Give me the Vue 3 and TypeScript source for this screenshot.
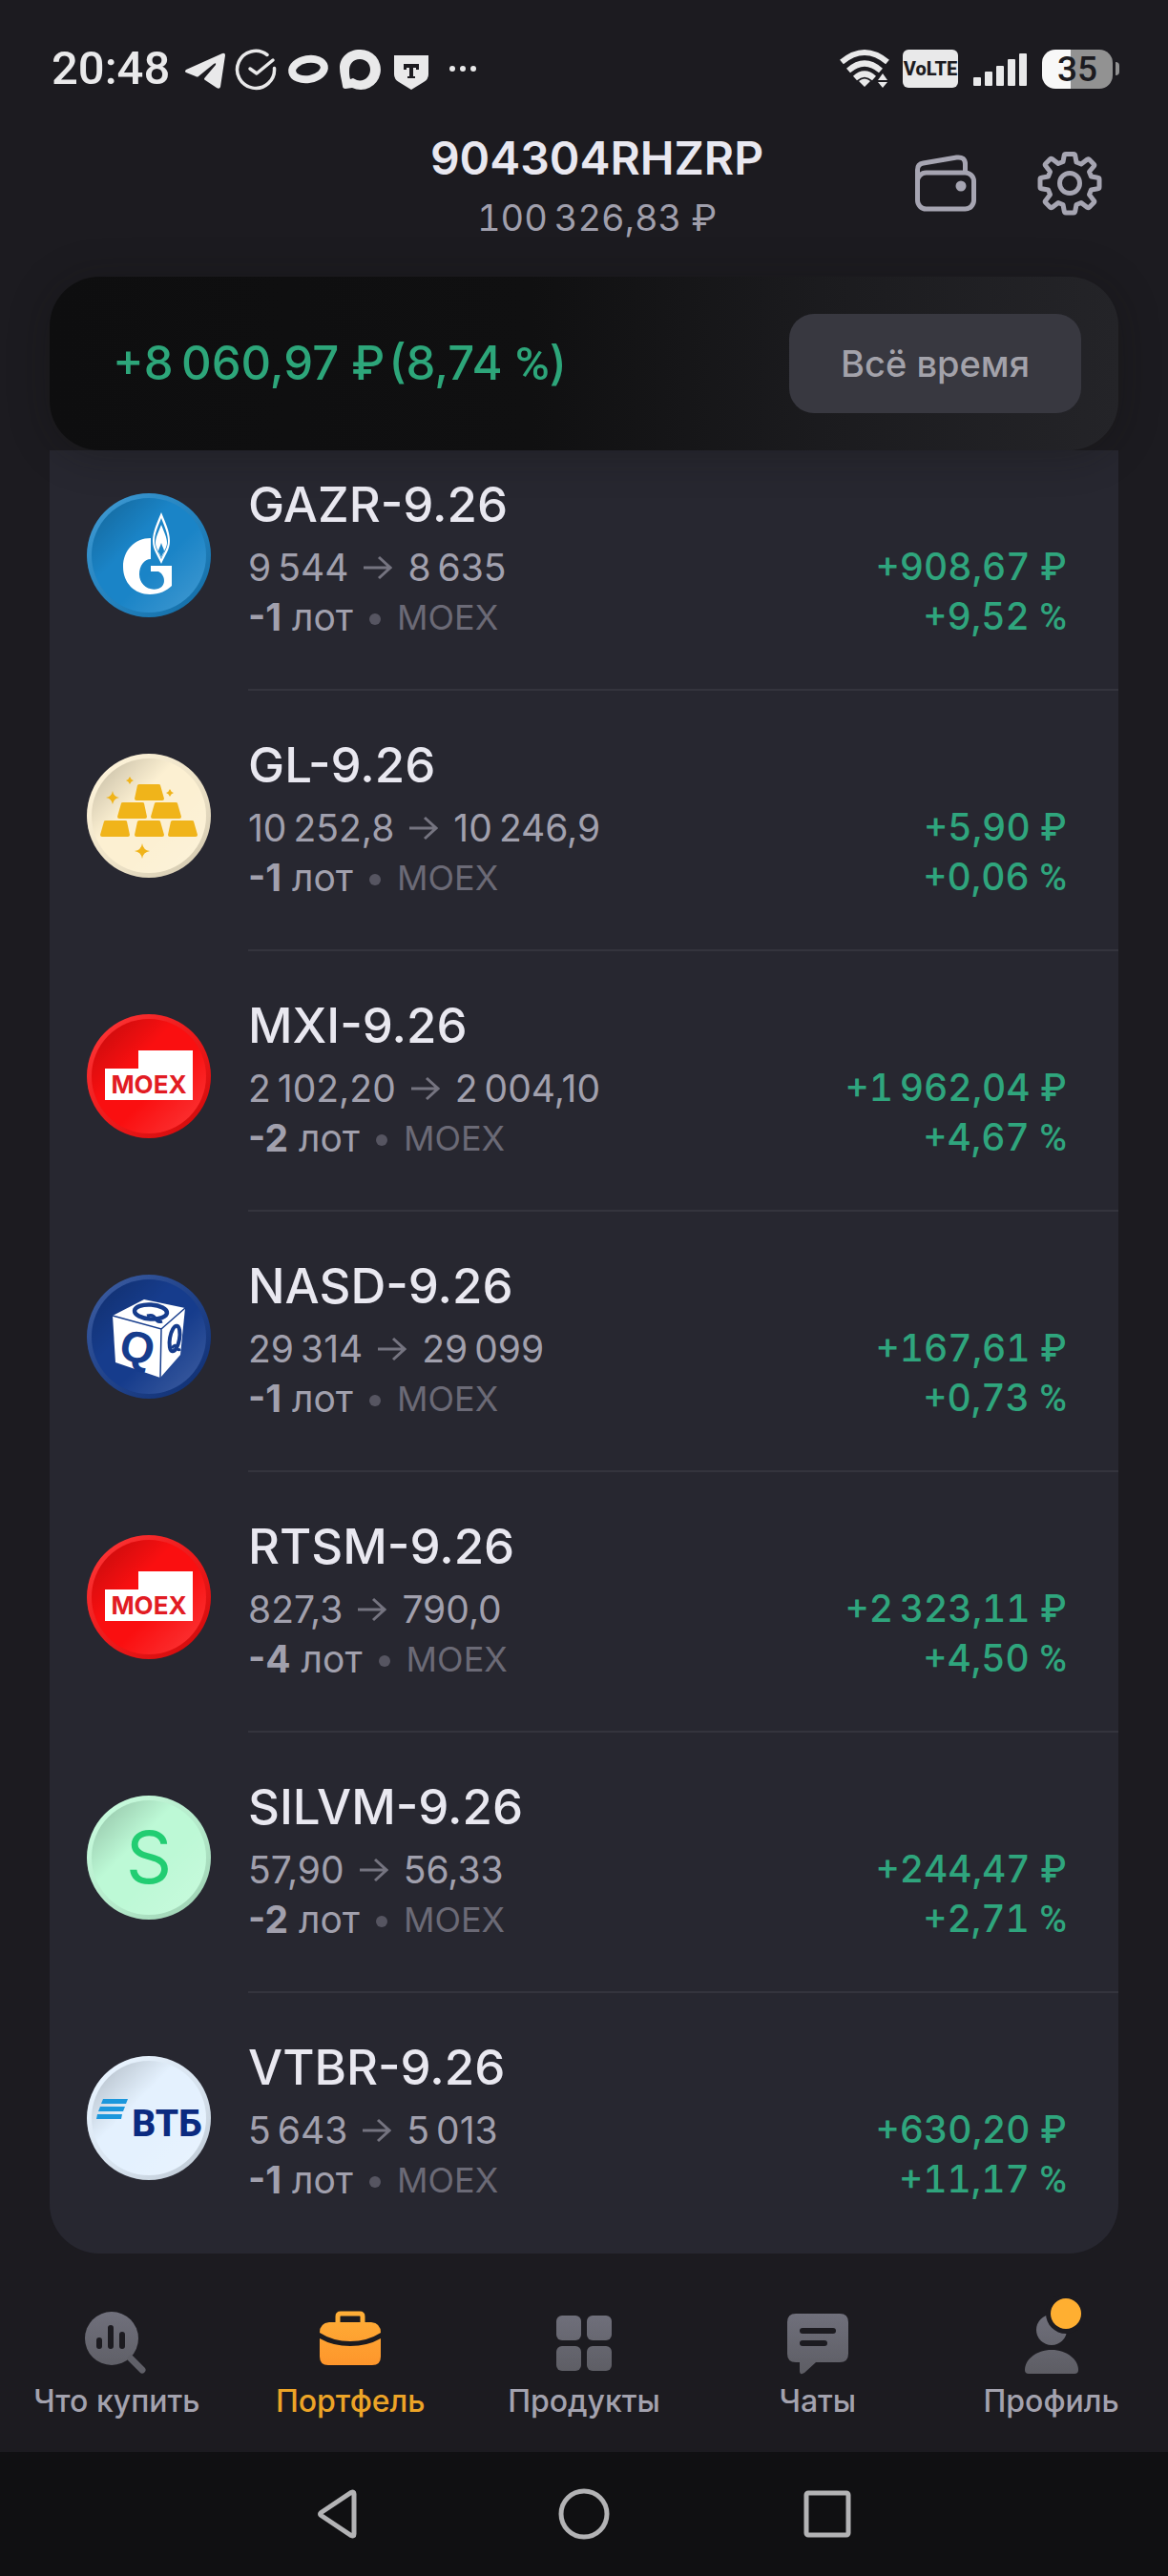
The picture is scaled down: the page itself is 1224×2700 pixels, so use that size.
<script setup lang="ts">
type Coin = 'gas' | 'gold' | 'moex' | 'cube' | 'silver' | 'vtb'

interface Position {
  ticker: string
  coin: Coin
  from: string
  to: string
  lots: string
  profit: string
  percent: string
}

const positions: Position[] = [
  { ticker: 'GAZR-9.26', coin: 'gas', from: '9\u2009544', to: '8\u2009635', lots: '-1', profit: '+908,67 ₽', percent: '+9,52' },
  { ticker: 'GL-9.26', coin: 'gold', from: '10\u2009252,8', to: '10\u2009246,9', lots: '-1', profit: '+5,90 ₽', percent: '+0,06' },
  { ticker: 'MXI-9.26', coin: 'moex', from: '2\u2009102,20', to: '2\u2009004,10', lots: '-2', profit: '+1\u2009962,04 ₽', percent: '+4,67' },
  { ticker: 'NASD-9.26', coin: 'cube', from: '29\u2009314', to: '29\u2009099', lots: '-1', profit: '+167,61 ₽', percent: '+0,73' },
  { ticker: 'RTSM-9.26', coin: 'moex', from: '827,3', to: '790,0', lots: '-4', profit: '+2\u2009323,11 ₽', percent: '+4,50' },
  { ticker: 'SILVM-9.26', coin: 'silver', from: '57,90', to: '56,33', lots: '-2', profit: '+244,47 ₽', percent: '+2,71' },
  { ticker: 'VTBR-9.26', coin: 'vtb', from: '5\u2009643', to: '5\u2009013', lots: '-1', profit: '+630,20 ₽', percent: '+11,17' },
]

const coinColor: Record<Coin, string> = {
  gas: '#1a84c7',
  gold: '#fcf0d2',
  moex: '#fa0f10',
  cube: '#163c8c',
  silver: '#bdf9d6',
  vtb: '#e4f1fe',
}

const tabs = [
  { id: 'buy', label: 'Что купить' },
  { id: 'portfolio', label: 'Портфель' },
  { id: 'products', label: 'Продукты' },
  { id: 'chats', label: 'Чаты' },
  { id: 'profile', label: 'Профиль' },
]
const activeTab = 'portfolio'
</script>

<template>
  <div class="app">
    <svg class="defs" aria-hidden="true">
      <defs>
        <linearGradient id="rim" x1="0" y1="0" x2="1" y2="1">
          <stop offset="0.15" stop-color="#fff" stop-opacity="0.14" />
          <stop offset="0.5" stop-color="#808080" stop-opacity="0.1" />
          <stop offset="0.85" stop-color="#000" stop-opacity="0.14" />
        </linearGradient>
        <linearGradient id="face" x1="0.1" y1="0.1" x2="0.9" y2="0.9">
          <stop offset="0" stop-color="#000" stop-opacity="0.18" />
          <stop offset="0.35" stop-color="#000" stop-opacity="0" />
          <stop offset="0.6" stop-color="#fff" stop-opacity="0" />
          <stop offset="1" stop-color="#fff" stop-opacity="0.14" />
        </linearGradient>
        <linearGradient id="gray" x1="0" y1="0" x2="0" y2="80" gradientUnits="userSpaceOnUse">
          <stop offset="0.1" stop-color="#71717d" />
          <stop offset="0.95" stop-color="#5d5d64" />
        </linearGradient>
        <linearGradient id="orange" x1="0" y1="0" x2="0" y2="80" gradientUnits="userSpaceOnUse">
          <stop offset="0.1" stop-color="#ffb038" />
          <stop offset="0.85" stop-color="#fe952b" />
        </linearGradient>
      </defs>
    </svg>

    <div class="status">
      <time>20:48</time>
      <svg class="notices" width="308" height="48" viewBox="0 0 308 48" fill="#e9e9ea" aria-hidden="true">
        <path d="M2 25 40 8q3-1 3 2l-5 33q-1 3-4 1l-12-8q-2-1 0-3l11-13q1-3-2-1L15 32q-1 1-3 0L2 28q-2-1 0-3Z" />
        <path d="M87 9.500A19.500 19.500 0 1 0 94.500 23.500" fill="none" stroke="#e9e9ea" stroke-width="3.500" stroke-linecap="round" />
        <path d="m69 24 7 5 17-14" fill="none" stroke="#e9e9ea" stroke-width="3.500" stroke-linecap="round" stroke-linejoin="round" />
        <ellipse cx="130" cy="24.500" rx="17" ry="10.500" fill="none" stroke="#e9e9ea" stroke-width="8" transform="rotate(-10 130 24.500)" />
        <path fill-rule="evenodd" d="M184 4a21 21 0 1 1-8 40l-7 1q-3 0-3-3c-1-6-3-13-3-19C163 12 172 4 184 4Zm0 10c-7 0-11 5-11 12 0 3 0 6 1 9l3-1 4 2c8 2 14-4 14-11 0-6-4-11-11-11Z" />
        <path fill-rule="evenodd" d="M220 10h36v20q0 5-5 8l-13 8-13-8q-5-3-5-8Zm10 9v6h3v-2h3v9h-2v2h8v-2h-2v-9h3v2h3v-6Z" />
        <circle cx="281" cy="24" r="3" /><circle cx="292" cy="24" r="3" /><circle cx="303" cy="24" r="3" />
      </svg>
      <div class="signals">
        <svg width="56" height="48" viewBox="0 0 56 48" aria-hidden="true">
          <g fill="none" stroke="#e9e9ea" stroke-width="6">
            <path d="M3 17q24-20 48 0" /><path d="M10 26q17-15 34 0" /><path d="M17 34q10-9 20 0" />
          </g>
          <path d="M21 37q6-5 12 0l-6 6ZM41 36l5-7 5 7Zm0 2h10l-5 6Z" fill="#e9e9ea" />
        </svg>
        <span class="volte">VoLTE</span>
        <svg class="bars" width="56" height="48" viewBox="0 0 56 48" fill="#e9e9ea" aria-hidden="true">
          <rect x="0" y="33" width="8" height="9" rx="1" /><rect x="12" y="27" width="8" height="15" rx="1" />
          <rect x="24" y="21" width="8" height="21" rx="1" /><rect x="36" y="14" width="8" height="28" rx="1" />
          <rect x="48" y="8" width="8" height="34" rx="1" />
        </svg>
        <span class="battery">35</span>
        <span class="battery-tip"></span>
      </div>
    </div>

    <header class="header">
      <div class="account">
        <h1>904304RHZRP</h1>
        <p>100&#8201;326,83 ₽</p>
      </div>
      <div class="actions">
        <button type="button" aria-label="Кошелёк">
          <svg width="72" height="72" viewBox="0 0 72 72" fill="none" stroke="#a6a5b2" stroke-width="5">
            <rect x="6.500" y="25" width="59" height="38" rx="9" />
            <path d="M6.500 36V22q0-6 6-7l35-6q9-1 9 7v9" />
            <circle cx="52" cy="39" r="5.500" fill="#a6a5b2" stroke="none" />
          </svg>
        </button>
        <button type="button" aria-label="Настройки">
          <svg width="72" height="72" viewBox="0 0 72 72" fill="none" stroke="#a6a5b2" stroke-width="5" stroke-linejoin="round">
            <path d="M32 5.500h8q1.500 0 1.700 1.500l1.300 7 5 2 6.500-5q1-.7 2 .3l4.700 4.700q1 1 .3 2L56.500 24l2 5 7 1.300q1.500.2 1.500 1.700v8q0 1.500-1.500 1.700l-7 1.300-2 5 5 6.500q.7 1-.3 2l-4.700 4.700q-1 1-2 .3L48 56.500l-5 2-1.300 7Q41.500 67 40 67h-8q-1.500 0-1.700-1.500l-1.300-7-5-2-6.500 5q-1 .7-2-.3l-4.700-4.700q-1-1-.3-2l5-6.500-2-5-7-1.300Q5 41.500 5 40v-8q0-1.500 1.500-1.700l7-1.300 2-5-5-6.500q-.7-1 .3-2l4.700-4.700q1-1 2-.3l6.500 5 5-2 1.300-7q.2-1 1.700-1Z" />
            <circle cx="36" cy="36" r="10.500" />
          </svg>
        </button>
      </div>
    </header>

    <section class="summary">
      <p>+8&#8201;060,97 ₽&#8202;(8,74 <span class="pct">%</span>)</p>
      <button type="button">Всё время</button>
    </section>

    <ul class="positions">
      <li v-for="p in positions" :key="p.ticker">
        <svg class="coin" width="130" height="130" viewBox="0 0 130 130" aria-hidden="true">
          <circle cx="65" cy="65" r="65" :fill="coinColor[p.coin]" />
          <circle cx="65" cy="65" r="65" fill="url(#rim)" />
          <circle cx="65" cy="65" r="60" :fill="coinColor[p.coin]" />
          <circle cx="65" cy="65" r="60" fill="url(#face)" />

          <g v-if="p.coin === 'gas'" fill="#fff">
            <path d="M67 47C50 47 38 60 38 77s12 29 28 29c10 0 18-4 23-9V76H67v6h8c7 3 9 15 0 18-11 3-20-5-20-15 0-9 5-16 12-16Z" />
            <path fill-rule="evenodd" d="M78 20c4 10 9 20 9 30 0 9-5 15-9 24-4-9-9-15-9-24 0-10 5-20 9-30Zm0 6c-3 8-7 16-7 24 0 7 4 12 7 19 3-7 7-12 7-19 0-8-4-16-7-24Z" />
            <path fill-rule="evenodd" d="M78 33c3 8 6 13 6 19 0 5-4 10-6 15-2-5-6-10-6-15 0-6 3-11 6-19Zm0 19c-1 4-3 6-3 9 0 2 2 4 3 7 1-3 3-5 3-7 0-3-2-5-3-9Z" />
          </g>

          <g v-else-if="p.coin === 'gold'" fill="#f0b41a">
            <path d="M55 32h20q2 0 2 1l4 14q0 2-2 2H52q-2 0-2-2l3-14q1-1 2-1Z" />
            <path d="M38 51h20q2 0 2 1l3 14q0 2-2 2H34q-2 0-2-2l4-14q0-1 2-1Z" />
            <path d="M73 51h20q2 0 2 1l4 14q0 2-2 2H69q-2 0-2-2l4-14q0-1 2-1Z" />
            <path d="M20 70h20q2 0 2 1l3 14q0 2-2 2H16q-2 0-2-2l4-14q0-1 2-1Z" />
            <path d="M55 70h20q2 0 2 1l4 14q0 2-2 2H52q-2 0-2-2l3-14q1-1 2-1Z" />
            <path d="M90 70h20q2 0 2 1l4 14q0 2-2 2H87q-2 0-2-2l3-14q1-1 2-1Z" />
            <path d="M27 39q1 6 7 7-6 1-7 7-1-6-7-7 6-1 7-7Zm18-15q1 3 4 4-3 1-4 4-1-3-4-4 3-1 4-4Zm42 13q1 3 4 4-3 1-4 4-1-3-4-4 3-1 4-4ZM58 94q1 7 8 8-7 1-8 8-1-7-8-8 7-1 8-8Z" />
          </g>

          <g v-else-if="p.coin === 'moex'">
            <path d="M54 38h57v52H19V57h35Z" fill="#fff" />
            <text x="65" y="83" class="mark moex">MOEX</text>
          </g>

          <g v-else-if="p.coin === 'cube'">
            <path d="m60 26 43 9-5 49-21 24-47-16-3-49Z" fill="#fff" />
            <path d="m27 43 51 14 25-22M78 57l-1 51" fill="none" stroke="#163c8c" stroke-width="1.500" />
            <g fill="none" stroke="#163c8c" stroke-width="4.500">
              <ellipse cx="67" cy="39" rx="17" ry="7.500" transform="rotate(4 67 39)" />
              <path d="M63 43q7-2 9 3t7 3" stroke-width="3" />
              <ellipse cx="92" cy="67" rx="5" ry="13.500" transform="rotate(10 92 67)" stroke-width="4" />
              <path d="M89 77q4-5 5-1t4 2" stroke-width="3" />
            </g>
            <text x="53" y="92" class="mark cube" transform="rotate(12 53 76)">Q</text>
          </g>

          <text v-else-if="p.coin === 'silver'" x="65" y="92" class="mark silver">S</text>

          <g v-else>
            <path d="M17 45h26l-2 5H15Zm-3 8h26l-2 5H12Zm-3 8h26l-1 5H10Z" fill="#1b97dc" />
            <text x="84" y="84" class="mark vtb">ВТБ</text>
          </g>
        </svg>

        <div class="body">
          <div class="info">
            <h2>{{ p.ticker }}</h2>
            <p class="prices">
              {{ p.from }}
              <svg width="30" height="26" viewBox="0 0 30 26" fill="none" stroke="#757480" stroke-width="3" role="img" aria-label="→">
                <path d="M0 13h28M16 2l12 11-12 11" />
              </svg>
              {{ p.to }}
            </p>
            <p class="lots"><span><b>{{ p.lots }}</b> лот</span><i></i><small>MOEX</small></p>
          </div>
          <div class="result">
            <span>{{ p.profit }}</span>
            <span>{{ p.percent }} <span class="pct">%</span></span>
          </div>
        </div>
      </li>
    </ul>

    <nav class="tabs">
      <a v-for="t in tabs" :key="t.id" :href="'#' + t.id" :class="{ active: t.id === activeTab }">
        <svg width="80" height="80" viewBox="0 0 80 80" fill="url(#gray)" aria-hidden="true">
          <g v-if="t.id === 'buy'">
            <circle cx="35" cy="39" r="28" />
            <path d="m55 60 12 12" stroke="#606068" stroke-width="7" stroke-linecap="round" />
            <path d="M22 41v6M34 28v19M46 35v12" stroke="#1c1b20" stroke-width="6" stroke-linecap="round" />
          </g>
          <g v-else-if="t.id === 'portfolio'" fill="url(#orange)">
            <path d="M27 24V16q0-3 3-3h20q3 0 3 3v8" fill="none" stroke="#ffae37" stroke-width="5" />
            <path d="M18 22h44q10 1 10 11-14 9-32 9T8 33q0-10 10-11Z" />
            <path d="M8 39q14 8 32 8t32-8v19q0 9-9 9H17q-9 0-9-9Z" />
          </g>
          <g v-else-if="t.id === 'products'">
            <rect x="11" y="15" width="26" height="26" rx="6" /><rect x="43" y="15" width="26" height="26" rx="6" />
            <rect x="11" y="47" width="26" height="26" rx="6" /><rect x="43" y="47" width="26" height="26" rx="6" />
          </g>
          <g v-else-if="t.id === 'chats'">
            <path d="M17 13h46q9 0 9 9v33q0 9-9 9H38L26 75q-5 3-5-2v-9h-4q-9 0-9-9V22q0-9 9-9Z" />
            <path d="M24 31h32M24 44h23" stroke="#1c1b20" stroke-width="6" stroke-linecap="round" />
          </g>
          <g v-else>
            <circle cx="40" cy="30" r="16" />
            <path d="M12 72c0-11 12-21 28-21s28 10 28 21q0 4-4 4H16q-4 0-4-4Z" />
            <circle cx="55" cy="13" r="21" fill="#1c1b20" />
            <circle cx="55" cy="13" r="16" fill="#ffaf31" />
          </g>
        </svg>
        <span>{{ t.label }}</span>
      </a>
    </nav>

    <div class="system">
      <button type="button" aria-label="Назад">
        <svg width="60" height="60" viewBox="0 0 60 60"><path d="M9.500 28.500 41 7.500q3-1.500 3 1.500v42q0 3-3 1.500l-31.500-21q-2-1.500 0-3Z" /></svg>
      </button>
      <button type="button" aria-label="Домой">
        <svg width="60" height="60" viewBox="0 0 60 60"><circle cx="30" cy="30" r="24" /></svg>
      </button>
      <button type="button" aria-label="Недавние">
        <svg width="60" height="60" viewBox="0 0 60 60"><rect x="8" y="8" width="44" height="44" rx="2" /></svg>
      </button>
    </div>
  </div>
</template>

<style>
body {
  background: #1c1b20;
}
</style>

<style scoped>
.app {
  display: flex;
  flex-direction: column;
  min-height: 100vh;
  background: #1c1b20;
  color: #e9e8f0;
  font-family: Inter, 'Noto Sans', sans-serif;
}

h1, h2, p, ul {
  margin: 0;
  padding: 0;
}

button {
  border: 0;
  padding: 0;
  background: none;
  font: inherit;
  color: inherit;
}

svg {
  display: block;
  flex: none;
}

.defs {
  position: absolute;
  width: 0;
  height: 0;
}

.status {
  display: flex;
  align-items: center;
  padding: 48px 51px 40px 54px;
  height: 48px;
}

.status time {
  font: 500 49px/48px Roboto, sans-serif;
  color: #e9e9ea;
}

.notices {
  margin-left: 15px;
}

.signals {
  display: flex;
  align-items: center;
  margin-left: auto;
}

.volte {
  margin-left: 11px;
  width: 58px;
  border-radius: 6px;
  background: #e9e9ea;
  color: #1c1b20;
  font: 800 20px/40px Roboto, sans-serif;
  text-align: center;
}

.bars {
  margin: 0 16px;
}

.battery {
  width: 74px;
  border-radius: 14px;
  background: linear-gradient(90deg, #f8f8f8 40%, #929292 40%);
  color: #1c1b20;
  font: 500 37px/41px Roboto, sans-serif;
  text-align: center;
}

.battery-tip {
  margin-left: 3px;
  width: 4px;
  height: 14px;
  border-radius: 0 4px 4px 0;
  background: #929292;
}

.header {
  display: grid;
  grid-template-columns: 1fr auto 1fr;
  padding: 0 67px 0 94px;
}

.account {
  grid-column: 2;
  text-align: center;
}

.account h1 {
  font-size: 48px;
  line-height: 60px;
  font-weight: 600;
}

.account p {
  margin-top: 6px;
  font-size: 38px;
  line-height: 52px;
  color: #a09fac;
  font-variant-numeric: tabular-nums;
}

.actions {
  display: flex;
  justify-content: flex-end;
  align-items: flex-start;
  gap: 58px;
  padding-top: 20px;
}

.summary {
  position: relative;
  display: flex;
  align-items: center;
  justify-content: space-between;
  margin: 36px 52px 0;
  padding: 39px 39px 39px 66px;
  border-radius: 52px;
  background: linear-gradient(90deg, #0e0e0f, #101011 45%, #1b1b1e 72%, #242428);
  box-shadow: 0 4px 44px rgba(15, 15, 12, 0.3);
}

.summary p {
  font-size: 49px;
  line-height: 60px;
  font-weight: 500;
  color: #2da67a;
}

.pct {
  font-family: Roboto, sans-serif;
}

.summary button {
  padding: 0 54px;
  border-radius: 26px;
  background: #383840;
  color: #a3a2aa;
  font-size: 38px;
  font-weight: 500;
  line-height: 104px;
}

.positions {
  margin: 0 52px;
  border-radius: 0 0 52px 52px;
  background: #272730;
  list-style: none;
}

.positions li {
  display: flex;
  padding-left: 39px;
}

.coin {
  margin: 66px 39px 0 0;
}

.body {
  flex: 1;
  display: flex;
  justify-content: space-between;
  align-items: flex-end;
  padding: 46px 54px 49px 0;
  border-bottom: 2px solid #34343d;
}

.positions li:first-child .coin {
  margin-top: 45px;
}

.positions li:first-child .body {
  padding-top: 25px;
}

.positions li:last-child .body {
  border-color: transparent;
}

h2 {
  margin-bottom: 8px;
  font-size: 51px;
  line-height: 64px;
  font-weight: 500;
}

.prices, .lots {
  display: flex;
  align-items: center;
  gap: 16px;
  font-size: 39px;
  line-height: 52px;
  color: #a1a0ad;
}

.lots i {
  width: 12px;
  height: 12px;
  margin: 4px 1px 0;
  border-radius: 6px;
  background: #565561;
}

.lots small {
  font-size: 36px;
  font-weight: 400;
  color: #6b6a76;
}

.result {
  display: flex;
  flex-direction: column;
  align-items: flex-end;
  font-size: 39px;
  line-height: 52px;
  font-weight: 500;
  color: #2fa57d;
  font-variant-numeric: tabular-nums;
}

.mark {
  text-anchor: middle;
}

.moex {
  font: 700 26px Inter, sans-serif;
  fill: #e21c23;
}

.cube {
  font: 700 46px 'Liberation Sans', sans-serif;
  fill: #163c8c;
}

.silver {
  font: 400 75px Inter, sans-serif;
  fill: #22cd72;
}

.vtb {
  font: 800 39px Roboto, sans-serif;
  fill: #0b2a80;
}

.tabs {
  display: grid;
  grid-template-columns: repeat(5, 1fr);
  padding: 50px 0 33px;
}

.tabs svg {
  overflow: visible;
}

.tabs a {
  display: flex;
  flex-direction: column;
  align-items: center;
  gap: 5px;
  color: #a3a2ae;
  font-size: 32px;
  line-height: 40px;
  font-weight: 500;
  text-decoration: none;
}

.tabs .active {
  color: #eca427;
}

.system {
  flex: 1;
  display: flex;
  justify-content: center;
  align-items: center;
  gap: 195px;
  padding: 35px 0;
  background: #101012;
}

.system svg {
  fill: none;
  stroke: #b3b3b5;
  stroke-width: 5;
}
</style>
